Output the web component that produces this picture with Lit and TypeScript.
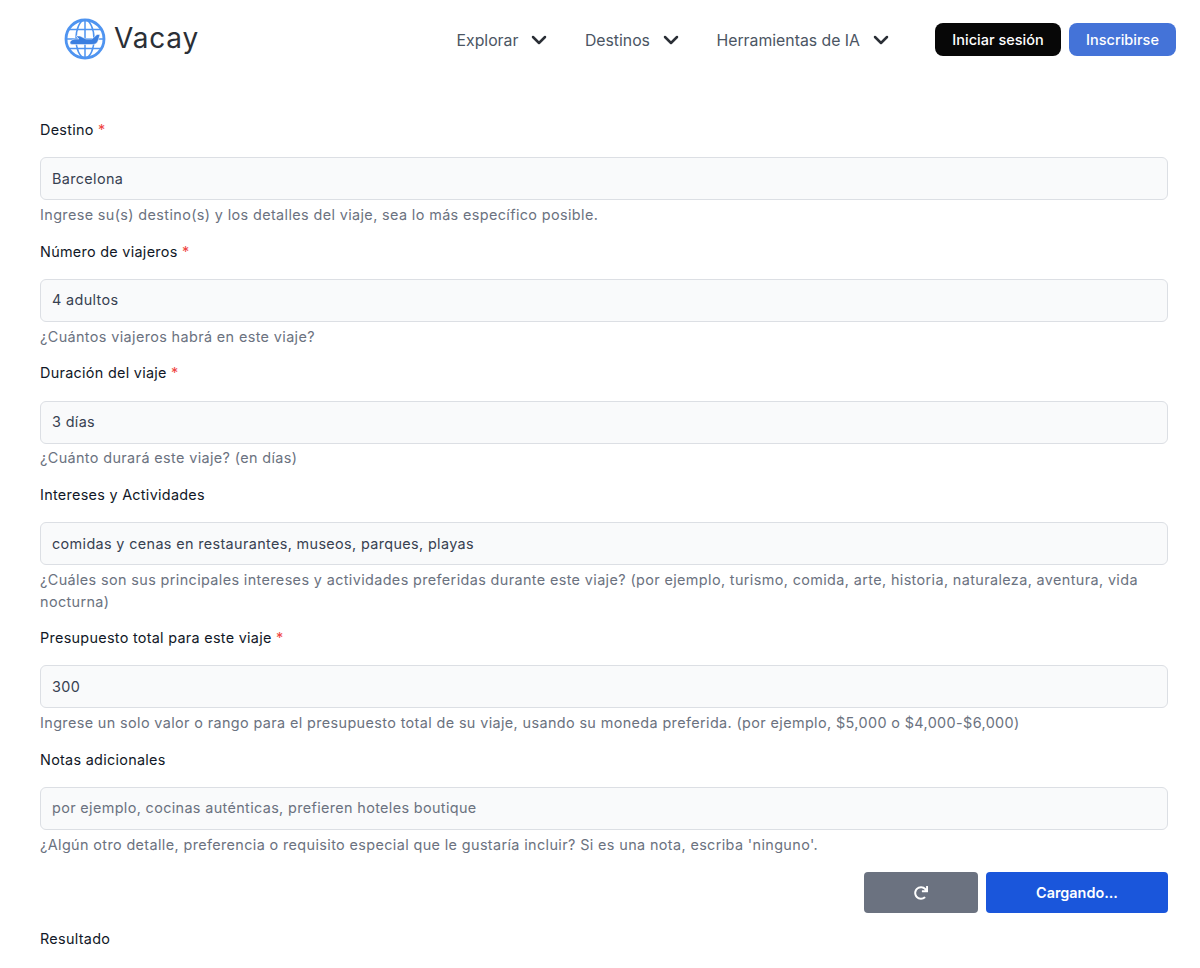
import { LitElement, html, css } from "lit";
import { customElement } from "lit/decorators.js";

const chevron = html`<svg class="chev" viewBox="0 0 16 10" width="16" height="10"><path d="M2 2l6 6 6-6" fill="none" stroke="#2b2f36" stroke-width="2.5" stroke-linecap="round" stroke-linejoin="round"/></svg>`;

const fields = [
  { label: "Destino", req: true, value: "Barcelona", help: "Ingrese su(s) destino(s) y los detalles del viaje, sea lo más específico posible." },
  { label: "Número de viajeros", req: true, value: "4 adultos", help: "¿Cuántos viajeros habrá en este viaje?" },
  { label: "Duración del viaje", req: true, value: "3 días", help: "¿Cuánto durará este viaje? (en días)" },
  { label: "Intereses y Actividades", req: false, value: "comidas y cenas en restaurantes, museos, parques, playas", help: "¿Cuáles son sus principales intereses y actividades preferidas durante este viaje? (por ejemplo, turismo, comida, arte, historia, naturaleza, aventura, vida nocturna)" },
  { label: "Presupuesto total para este viaje", req: true, value: "300", help: "Ingrese un solo valor o rango para el presupuesto total de su viaje, usando su moneda preferida. (por ejemplo, $5,000 o $4,000-$6,000)" },
  { label: "Notas adicionales", req: false, placeholder: "por ejemplo, cocinas auténticas, prefieren hoteles boutique", help: "¿Algún otro detalle, preferencia o requisito especial que le gustaría incluir? Si es una nota, escriba 'ninguno'." },
];

@customElement("app-root")
export class AppRoot extends LitElement {
  static styles = css`
    :host { display: block; font-family: Inter, "Liberation Sans", sans-serif; background: #fff; color: #111827; height: 968px; overflow: hidden; }
    header { display: flex; align-items: center; height: 78px; padding: 0 24px 0 64px; }
    .logo { display: flex; align-items: center; gap: 8px; }
    .logo span { font-family: Inter, sans-serif; font-size: 28px; color: #2b2f36; letter-spacing: 0.8px; padding-bottom: 2px; }
    nav { margin-left: auto; display: flex; align-items: center; gap: 37.5px; font-size: 15.8px; color: #4b5563; padding-top: 2px; }
    .item { display: flex; align-items: center; gap: 13px; }
    .auth { display: flex; gap: 8px; margin-left: 46px; }
    .btn { height: 33px; border-radius: 8px; color: #fff; font-size: 14.5px; font-weight: 500; display: flex; align-items: center; justify-content: center; }
    .signin { width: 126px; background: #070707; }
    .signup { width: 107px; background: #4473d8; }
    form { padding: 41.2px 32px 0 40px; }
    label { display: block; font-size: 14.4px; line-height: 21.6px; font-weight: 400; letter-spacing: 0.29px; margin-bottom: 16.6px; color: #111827; }
    .req { color: #ef4444; }
    .input { height: 43px; box-sizing: border-box; border: 1px solid #dcdfe4; border-radius: 6px; background: #f9fafb; padding: 0 11px 1px; font-size: 14.4px; letter-spacing: 0.36px; display: flex; align-items: center; color: #374151; }
    .ph { color: #6b7280; }
    .help { font-size: 14.4px; line-height: 21.6px; color: #6b7280; margin: 3.8px 0 15px; letter-spacing: 0.38px; }
    .actions { display: flex; justify-content: flex-end; gap: 8px; margin-top: 17px; }
    .act { height: 41px; border-radius: 4px; display: flex; align-items: center; justify-content: center; color: #fff; font-size: 14.4px; font-weight: 600; }
    .reset { width: 114px; background: #6b7280; }
    .load { width: 182px; background: #1a56db; }
    .result { margin-top: 15px; }
  `;

  render() {
    return html`
      <header>
        <div class="logo">
          <svg width="42" height="42" viewBox="0 0 42 42" fill="none" stroke="#4f94f0">
            <circle cx="21" cy="21" r="19" stroke-width="2.8"/>
            <ellipse cx="21" cy="21" rx="9" ry="19" stroke-width="1.5"/>
            <path d="M21 2v38M5 11.5h32M2 21h38M5 30.5h32" stroke-width="1.5"/>
            <path d="M6 25c0-2.500 3-4 6-4h3l-3-3h4l6 3h6l5-4.500h3l-2 6.500c-.8 2.500-3 3.500-6 3.500H10c-3 0-4-.5-4-1.500z" fill="#3b7fe0" stroke="#fff" stroke-width=".5"/>
          </svg>
          <span>Vacay</span>
        </div>
        <nav>
          <div class="item">Explorar ${chevron}</div>
          <div class="item">Destinos ${chevron}</div>
          <div class="item">Herramientas de IA ${chevron}</div>
        </nav>
        <div class="auth">
          <div class="btn signin">Iniciar sesión</div>
          <div class="btn signup">Inscribirse</div>
        </div>
      </header>
      <form>
        ${fields.map(f => html`
          <div class="field">
            <label>${f.label}${f.req ? html` <span class="req">*</span>` : ""}</label>
            <div class="input">${f.value ?? html`<span class="ph">${f.placeholder}</span>`}</div>
            <div class="help">${f.help}</div>
          </div>`)}
        <div class="actions">
          <div class="act reset">
            <svg width="14" height="14" viewBox="0 0 512 512" fill="#fff"><path d="M500.33 0h-47.41a12 12 0 0 0-12 12.57l4 82.76A247.42 247.42 0 0 0 256 8C119.34 8 8.9 119.53 8 256.19 7.1 393.07 118.08 504 256 504a247.1 247.1 0 0 0 166.18-63.91 12 12 0 0 0 .48-17.43l-34-34a12 12 0 0 0-16.38-.55A176 176 0 1 1 402.1 157.8l-101.53-4.87a12 12 0 0 0-12.57 12v47.41a12 12 0 0 0 12 12h200.33a12 12 0 0 0 12-12V12a12 12 0 0 0-12-12z"/></svg>
          </div>
          <div class="act load">Cargando...</div>
        </div>
        <label class="result">Resultado</label>
      </form>
    `;
  }
}
